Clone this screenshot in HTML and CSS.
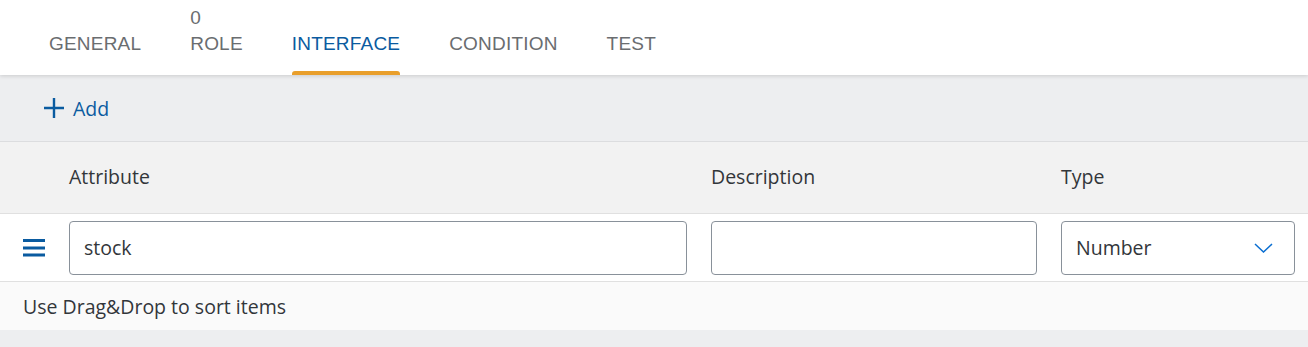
FILE: index.html
```html
<!DOCTYPE html>
<html lang="en">
<head>
    <meta charset="UTF-8">
    <title>Interface</title>
    <link rel="stylesheet" href="styles.css">
</head>
<body>

<div class="tabs">
    <div class="tab"><span class="tab-label">GENERAL</span></div>
    <div class="tab"><span class="tab-count">0</span><span class="tab-label">ROLE</span></div>
    <div class="tab active"><span class="tab-label">INTERFACE</span></div>
    <div class="tab"><span class="tab-label">CONDITION</span></div>
    <div class="tab"><span class="tab-label">TEST</span></div>
</div>

<div class="toolbar">
    <button class="add-btn" type="button">
        <svg width="20" height="20" viewBox="0 0 20 20"><path d="M10 0v20M0 10h20" stroke="#0a5ba0" stroke-width="2.4" fill="none"/></svg>
        <span>Add</span>
    </button>
</div>

<div class="grid header-row">
    <span></span>
    <span>Attribute</span>
    <span>Description</span>
    <span>Type</span>
</div>

<div class="grid item-row">
    <span class="handle">
        <svg width="22" height="18" viewBox="0 0 22 18"><path d="M0 1.5h22M0 9h22M0 16h22" stroke="#0a5ba0" stroke-width="3" fill="none"/></svg>
    </span>
    <input class="field" type="text" value="stock">
    <input class="field" type="text" value="">
    <div class="field select">
        <span>Number</span>
        <svg width="19" height="10" viewBox="0 0 19 10"><path d="M1 1l8.5 8 8.5-8" stroke="#0a6ed1" stroke-width="1.5" fill="none"/></svg>
    </div>
</div>

<div class="hint">Use Drag&amp;Drop to sort items</div>

</body>
</html>
```

FILE: styles.css
```css
/* Global styles */
body {
    margin: 0;
    background: #edeef0;
    font-family: 'Open Sans', sans-serif;
    color: #32363a;
}

.tabs {
    height: 75px;
    background: #ffffff;
    display: flex;
    gap: 49px;
    padding-left: 49px;
    box-shadow: 0 1px 4px rgba(0, 0, 0, 0.15);
    position: relative;
}

.tab {
    display: flex;
    flex-direction: column;
    justify-content: flex-end;
    color: #6a6d70;
    font-family: 'Liberation Sans', sans-serif;
    font-size: 19px;
    letter-spacing: 0.2px;
}

.tab-count {
    line-height: 20px;
    margin-bottom: 5px;
}

.tab-label {
    line-height: 22px;
}

.tab::after {
    content: '';
    display: block;
    height: 4px;
    margin-top: 16px;
    border-radius: 3px 3px 0 0;
}

.tab.active {
    color: #0a5ba0;
}

.tab.active::after {
    background: #e99f2c;
}

.toolbar {
    height: 66px;
    border-bottom: 1px solid #dcdddf;
    display: flex;
    align-items: center;
    padding-left: 44px;
}

.add-btn {
    display: flex;
    align-items: center;
    gap: 9px;
    background: none;
    border: none;
    padding: 0;
    color: #0a5ba0;
    font-family: 'Open Sans', sans-serif;
    font-size: 19.5px;
    cursor: pointer;
}

.grid {
    display: grid;
    grid-template-columns: 22px 618px 326px 234px;
    column-gap: 24px;
    padding-left: 23px;
    align-items: center;
}

.header-row {
    height: 72px;
    box-sizing: border-box;
    padding-bottom: 2px;
    background: #f2f2f2;
    border-bottom: 1px solid #e0e0e0;
    font-size: 19.5px;
}

.item-row {
    height: 67px;
    background: #ffffff;
    border-bottom: 1px solid #e0e0e0;
}

.handle {
    display: flex;
}

.field {
    box-sizing: border-box;
    height: 54px;
    border: 1px solid #89919a;
    border-radius: 4px;
    background: #ffffff;
    padding: 0 14px;
    font-family: 'Open Sans', sans-serif;
    font-size: 19.5px;
    color: #32363a;
    outline: none;
}

.select {
    display: flex;
    align-items: center;
    justify-content: space-between;
    padding-right: 21px;
}

.hint {
    height: 48px;
    background: #fafafa;
    display: flex;
    align-items: center;
    padding-left: 23px;
    font-size: 19.5px;
}
```
